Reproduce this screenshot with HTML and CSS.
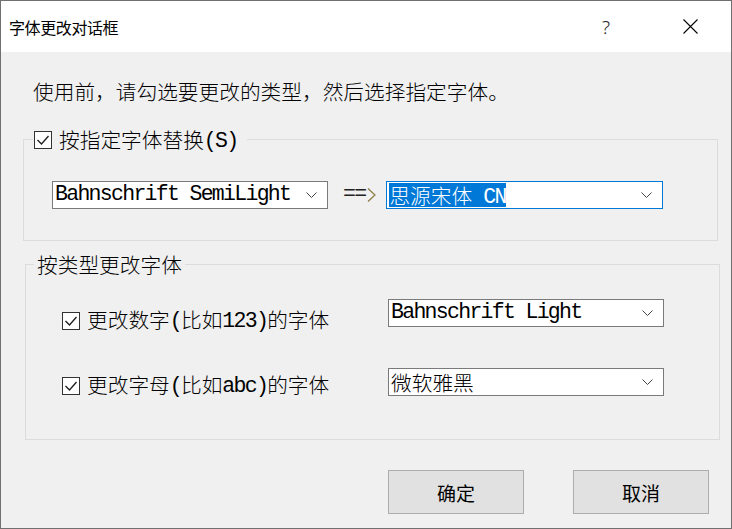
FILE: index.html
```html
<!DOCTYPE html>
<html lang="zh-CN">
<head>
<meta charset="utf-8">
<title>字体更改对话框</title>
<link rel="stylesheet" href="styles.css">
</head>
<body>
<div class="window">
  <div class="titlebar">
    <span class="title">字体更改对话框</span>
    <span class="help">?</span>
    <span class="close">
      <svg width="15" height="15" viewBox="0 0 15 15"><path d="M0.5 0.5 L14.5 14.5 M14.5 0.5 L0.5 14.5" stroke="#000" stroke-width="1.1" fill="none"/></svg>
    </span>
  </div>
  <div class="content">
    <p class="intro">使用前，请勾选要更改的类型，然后选择指定字体。</p>

    <fieldset class="group group-replace">
      <legend class="legend legend-check">
        <span class="check"><svg width="16" height="16" viewBox="0 0 16 16"><path d="M2.5 8 L6.5 12 L13.5 4" stroke="#222" stroke-width="1.4" fill="none"/></svg></span>
        <span class="label">按指定字体替换<span class="a">(S)</span></span>
      </legend>
      <div class="replace-row">
        <div class="combo combo-src">
          <span class="val a">Bahnschrift SemiLight</span>
          <svg class="chev" width="11" height="7" viewBox="0 0 11 7"><path d="M0.5 0.5 L5.5 5.5 L10.5 0.5" stroke="#444" stroke-width="1" fill="none"/></svg>
        </div>
        <span class="arrow"><span class="a">==</span><svg width="9" height="14" viewBox="0 0 9 14"><path d="M1 0.5 L8 7 L1 13.5" stroke="#8a7b42" stroke-width="1.2" fill="none"/></svg></span>
        <div class="combo combo-dst">
          <span class="sel">思源宋体<span class="a"> CN</span></span>
          <svg class="chev" width="11" height="7" viewBox="0 0 11 7"><path d="M0.5 0.5 L5.5 5.5 L10.5 0.5" stroke="#444" stroke-width="1" fill="none"/></svg>
        </div>
      </div>
    </fieldset>

    <fieldset class="group group-type">
      <legend class="legend legend-text">按类型更改字体</legend>
      <div class="type-grid">
        <div class="opt-col">
          <div class="opt">
            <span class="check"><svg width="16" height="16" viewBox="0 0 16 16"><path d="M2.5 8 L6.5 12 L13.5 4" stroke="#222" stroke-width="1.4" fill="none"/></svg></span>
            <span class="label">更改数字<span class="a">(</span>比如<span class="a">123)</span>的字体</span>
          </div>
          <div class="opt">
            <span class="check"><svg width="16" height="16" viewBox="0 0 16 16"><path d="M2.5 8 L6.5 12 L13.5 4" stroke="#222" stroke-width="1.4" fill="none"/></svg></span>
            <span class="label">更改字母<span class="a">(</span>比如<span class="a">abc)</span>的字体</span>
          </div>
        </div>
        <div class="combo-col">
          <div class="combo">
            <span class="val a">Bahnschrift Light</span>
            <svg class="chev" width="11" height="7" viewBox="0 0 11 7"><path d="M0.5 0.5 L5.5 5.5 L10.5 0.5" stroke="#444" stroke-width="1" fill="none"/></svg>
          </div>
          <div class="combo">
            <span class="val">微软雅黑</span>
            <svg class="chev" width="11" height="7" viewBox="0 0 11 7"><path d="M0.5 0.5 L5.5 5.5 L10.5 0.5" stroke="#444" stroke-width="1" fill="none"/></svg>
          </div>
        </div>
      </div>
    </fieldset>

    <div class="buttons">
      <button class="btn">确定</button>
      <button class="btn">取消</button>
    </div>
  </div>
</div>
</body>
</html>
```

FILE: styles.css
```css
* { box-sizing: border-box; }

html, body {
  margin: 0;
  padding: 0;
  background: #f0f0f0;
}

.window {
  width: 732px;
  height: 529px;
  border: 1px solid #707070;
  background: #f0f0f0;
  display: flex;
  flex-direction: column;
  font-family: "Noto Sans CJK SC", sans-serif;
  color: #000;
  overflow: hidden;
}

.titlebar {
  height: 51px;
  background: #fff;
  display: flex;
  align-items: center;
  flex: none;
}

.title {
  font-size: 16px;
  margin-left: 8px;
  line-height: 20px;
  letter-spacing: -0.4px;
}

.help {
  margin-left: auto;
  font-family: "Noto Sans", sans-serif;
  font-size: 19px;
  font-weight: 300;
  color: #222;
  line-height: 20px;
  margin-right: 73px;
}

.close {
  display: flex;
  margin-right: 33px;
}

.content {
  flex: 1;
  display: flex;
  flex-direction: column;
  align-items: flex-start;
  font-size: 20.7px;
  font-weight: 300;
  line-height: 24px;
}

.a {
  font-family: "Liberation Mono", monospace;
  font-size: 21.5px;
  letter-spacing: -1.7px;
  font-weight: 400;
  line-height: 1;
  vertical-align: 1px;
}

.combo .val.a {
  vertical-align: baseline;
}

.intro {
  margin: 27px 0 0 32px;
  white-space: nowrap;
}

.group {
  margin: 0;
  padding: 0;
  border: 1px solid #dcdcdc;
  width: 695px;
  min-inline-size: 0;
}

.group-replace {
  margin: 25px 0 0 22px;
  padding-bottom: 31px;
}

.group-type {
  margin: 12px 0 0 24px;
  padding-bottom: 43px;
}

.legend {
  line-height: 22px;
  height: 22px;
  white-space: nowrap;
}

.legend-check {
  display: flex;
  align-items: center;
  margin-left: 9px;
  padding: 0 10px 0 1px;
}

.legend-text {
  margin-left: 8px;
  padding: 0 3px;
}

.check {
  width: 18px;
  height: 18px;
  border: 1px solid #333;
  background: #fff;
  display: flex;
  align-items: center;
  justify-content: center;
  flex: none;
}

.label {
  margin-left: 7px;
  white-space: nowrap;
  line-height: 24px;
  height: 24px;
}

.legend-check .label {
  line-height: 22px;
  height: 22px;
}

.legend-check .check {
  margin-top: 2px;
}

.replace-row {
  display: flex;
  align-items: center;
  margin: 31px 0 0 28px;
}

.combo {
  width: 276px;
  height: 28px;
  border: 1px solid #7a7a7a;
  background: #fff;
  display: flex;
  align-items: center;
  padding: 0 10px 0 2px;
  white-space: nowrap;
}

.combo .chev {
  margin-left: auto;
  flex: none;
}

.combo-dst {
  width: 277px;
  border-color: #0078d7;
}

.sel {
  background: #0078d7;
  color: #fff;
  line-height: 24px;
  height: 24px;
  display: inline-block;
}

.arrow {
  display: flex;
  align-items: center;
  margin: 0 10px 0 15px;
  color: #222;
}

.arrow svg {
  margin-left: 2px;
}

.type-grid {
  display: grid;
  grid-template-columns: 326px 276px;
  padding-left: 36px;
}

.opt-col {
  display: flex;
  flex-direction: column;
  gap: 41px;
  margin-top: 32px;
}

.opt {
  display: flex;
  align-items: flex-start;
  height: 24px;
}

.opt .check {
  margin-top: 5px;
}

.combo-col {
  display: flex;
  flex-direction: column;
  gap: 41px;
  margin-top: 24px;
}

.buttons {
  display: flex;
  gap: 49px;
  align-self: flex-end;
  margin: 30px 22px 0 0;
}

.btn {
  width: 136px;
  height: 44px;
  background: #e1e1e1;
  border: 1px solid #adadad;
  font-family: "Noto Sans CJK SC", sans-serif;
  font-size: 19px;
  color: #000;
  padding: 0;
  margin: 0;
}
```
